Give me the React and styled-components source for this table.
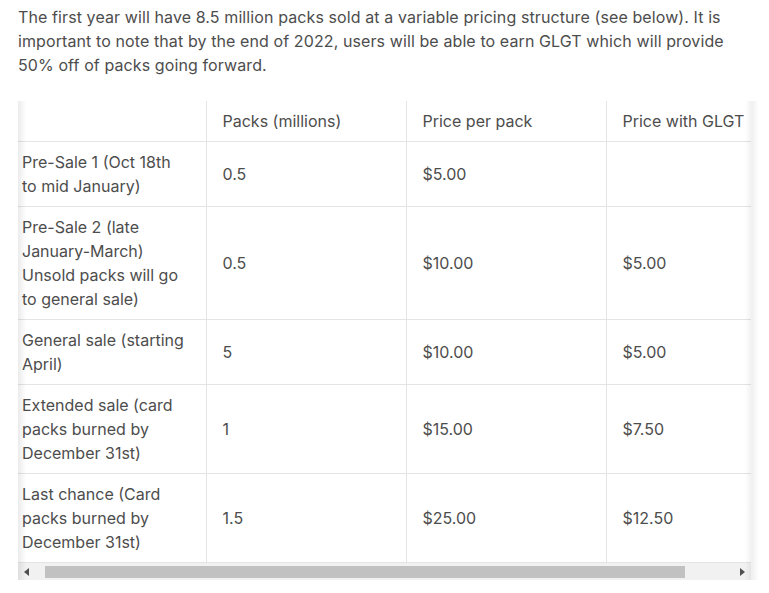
import styled, { createGlobalStyle } from 'styled-components';

const GlobalStyle = createGlobalStyle`
    body {
        margin: 0;
        background: #ffffff;
        font-family: Inter, "Noto Sans", sans-serif;
        color: #4a4a4a;
    }
`

const rows = [
    { stage: 'Pre-Sale 1 (Oct 18th to mid January)', packs: '0.5', price: '$5.00', glgt: '' },
    { stage: 'Pre-Sale 2 (late January-March) Unsold packs will go to general sale)', packs: '0.5', price: '$10.00', glgt: '$5.00' },
    { stage: 'General sale (starting April)', packs: '5', price: '$10.00', glgt: '$5.00' },
    { stage: 'Extended sale (card packs burned by December 31st)', packs: '1', price: '$15.00', glgt: '$7.50' },
    { stage: 'Last chance (Card packs burned by December 31st)', packs: '1.5', price: '$25.00', glgt: '$12.50' },
];

const Arrow = ({ dir }) => (
    <svg width="5" height="8" viewBox="0 0 5 8">
        {dir === 'left'
            ? <polygon points="5,0 5,8 0,4" fill="#505050" />
            : <polygon points="0,0 0,8 5,4" fill="#505050" />}
    </svg>
);

export default function App() {
    return (
        <Page>
            <GlobalStyle />
            <Intro>
                The first year will have 8.5 million packs sold at a variable pricing structure (see below). It is
                important to note that by the end of 2022, users will be able to earn GLGT which will provide
                50% off of packs going forward.
            </Intro>
            <TableFrame>
                <Scroller>
                    <Table>
                        <colgroup>
                            <col style={{ width: 188 }} />
                            <col style={{ width: 200 }} />
                            <col style={{ width: 200 }} />
                            <col style={{ width: 200 }} />
                        </colgroup>
                        <thead>
                            <tr>
                                <Th $first></Th>
                                <Th>Packs (millions)</Th>
                                <Th>Price per pack</Th>
                                <Th>Price with GLGT</Th>
                            </tr>
                        </thead>
                        <tbody>
                            {rows.map((r) => (
                                <tr key={r.stage}>
                                    <Td $first>{r.stage}</Td>
                                    <Td>{r.packs}</Td>
                                    <Td>{r.price}</Td>
                                    <Td>{r.glgt}</Td>
                                </tr>
                            ))}
                        </tbody>
                    </Table>
                </Scroller>
                <ShadowLeft />
                <ShadowRight />
                <ScrollBar>
                    <ArrowBtn><Arrow dir="left" /></ArrowBtn>
                    <Track>
                        <Thumb />
                    </Track>
                    <ArrowBtn><Arrow dir="right" /></ArrowBtn>
                </ScrollBar>
            </TableFrame>
        </Page>
    );
}

const Page = styled.div`
    padding: 5px 18px 0 18px;
`

const Intro = styled.p`
    margin: 0 0 24px 0;
    width: 728px;
    font-size: 16px;
    line-height: 24px;
    letter-spacing: 0.1px;
    color: #4d4d4d;
`

const TableFrame = styled.div`
    position: relative;
    width: 733px;
`

const Scroller = styled.div`
    overflow: hidden;
`

const Table = styled.table`
    border-collapse: collapse;
    table-layout: fixed;
    width: 788px;
    font-size: 16px;
    line-height: 24px;
`

const Th = styled.th`
    text-align: left;
    font-weight: 400;
    padding: 8px 16px;
    padding-left: ${(p) => (p.$first ? '4px' : '16px')};
    border-left: ${(p) => (p.$first ? 'none' : '1px solid #e4e4e4')};
    border-bottom: 1px solid #e4e4e4;
    color: #4d4d4d;
    white-space: nowrap;
`

const Td = styled.td`
    padding: 8px 16px;
    padding-left: ${(p) => (p.$first ? '4px' : '16px')};
    padding-right: ${(p) => (p.$first ? '19px' : '16px')};
    border-left: ${(p) => (p.$first ? 'none' : '1px solid #e4e4e4')};
    border-bottom: 1px solid #e4e4e4;
    vertical-align: middle;
    color: #4d4d4d;
`

const ShadowLeft = styled.div`
    position: absolute;
    left: 0;
    top: 0;
    bottom: 0;
    width: 8px;
    background: linear-gradient(to right, rgba(0, 0, 0, 0.08), rgba(0, 0, 0, 0));
    pointer-events: none;
`

const ShadowRight = styled.div`
    position: absolute;
    right: -8px;
    top: 0;
    bottom: 0;
    width: 14px;
    background: linear-gradient(to right, rgba(0, 0, 0, 0), rgba(0, 0, 0, 0.06) 50%, rgba(0, 0, 0, 0));
    pointer-events: none;
`

const ScrollBar = styled.div`
    display: flex;
    align-items: stretch;
    height: 17px;
    background: #f1f1f1;
`

const ArrowBtn = styled.div`
    display: flex;
    align-items: center;
    justify-content: center;
    width: 17px;
    flex-shrink: 0;
`

const Track = styled.div`
    flex: 1;
    display: flex;
    align-items: center;
`

const Thumb = styled.div`
    height: 12px;
    width: 640px;
    margin-left: 10px;
    background: #c1c1c1;
`
